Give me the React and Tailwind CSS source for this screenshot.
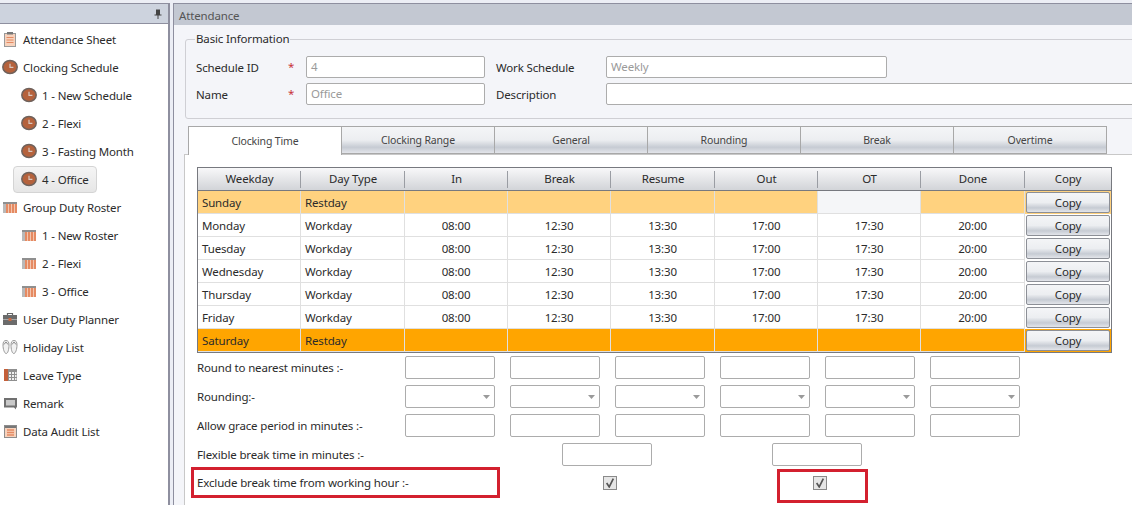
import React from "react";

const weekdays = [
  { day: "Sunday", type: "Restday", bg: "bg-[#ffd27f]", rest: true },
  { day: "Monday", type: "Workday" },
  { day: "Tuesday", type: "Workday" },
  { day: "Wednesday", type: "Workday" },
  { day: "Thursday", type: "Workday" },
  { day: "Friday", type: "Workday" },
  { day: "Saturday", type: "Restday", bg: "bg-[#ffa500]", rest: true },
];

const times = ["08:00", "12:30", "13:30", "17:00", "17:30", "20:00"];
const headers = ["Weekday", "Day Type", "In", "Break", "Resume", "Out", "OT", "Done", "Copy"];
const tabs = ["Clocking Range", "General", "Rounding", "Break", "Overtime"];

const ClockIcon = () => (
  <svg width="16" height="16" viewBox="0 0 16 16" className="shrink-0">
    <ellipse cx="8" cy="8" rx="7.2" ry="6.6" fill="#b5623c" stroke="#6f625c" strokeWidth="1.5" />
    <path d="M8 4.8V8.3H11.4" fill="none" stroke="#d9c8c0" strokeWidth="1.2" />
  </svg>
);

const SheetIcon = () => (
  <svg width="16" height="16" viewBox="0 0 16 16" className="shrink-0">
    <rect x="2.5" y="2.5" width="11" height="13" fill="#f7d2bc" stroke="#999" />
    <rect x="5" y="1" width="6" height="2.5" fill="#777" />
    <path d="M4.5 6.5H11.5M4.5 9H11.5M4.5 11.5H11.5" stroke="#e58a62" strokeWidth="1.2" />
  </svg>
);

const RosterIcon = () => (
  <svg width="16" height="16" viewBox="0 0 16 16" className="shrink-0">
    <rect x="1" y="3" width="14" height="11" fill="#e58a62" />
    <rect x="1" y="3" width="14" height="2" fill="#8f8f8f" />
    <rect x="1" y="5" width="3" height="9" fill="#b9b9b9" />
    <path d="M6.5 5V14M9.5 5V14M12.5 5V14" stroke="#f3c5ae" strokeWidth="1" />
  </svg>
);

const BriefcaseIcon = () => (
  <svg width="16" height="16" viewBox="0 0 16 16" className="shrink-0">
    <path d="M5.5 4V2.5H10.5V4" fill="none" stroke="#666" strokeWidth="1.2" />
    <rect x="1" y="4" width="14" height="10" fill="#6b6b6b" />
    <rect x="1" y="8" width="14" height="1" fill="#a8a8a8" />
    <rect x="6.5" y="7" width="3" height="3" fill="#c96a42" />
  </svg>
);

const FlipFlopIcon = () => (
  <svg width="16" height="16" viewBox="0 0 16 16" className="shrink-0">
    <path d="M4 1.5C6 1.5 7 3 7 6C7 10 6 14.5 4.2 14.5C2.4 14.5 1 10 1 6C1 3 2 1.5 4 1.5Z" fill="#f2f2f2" stroke="#9a9a9a" />
    <path d="M12 1.5C14 1.5 15 3 15 6C15 10 13.6 14.5 11.8 14.5C10 14.5 9 10 9 6C9 3 10 1.5 12 1.5Z" fill="#f2f2f2" stroke="#9a9a9a" />
    <path d="M2 5.5L4 3L6 5.5M10 5.5L12 3L14 5.5" fill="none" stroke="#8a8a8a" />
  </svg>
);

const LeaveIcon = () => (
  <svg width="16" height="16" viewBox="0 0 16 16" className="shrink-0">
    <rect x="2" y="2" width="13" height="12" fill="#8f8f8f" />
    <rect x="2" y="2" width="4" height="12" fill="#c4603a" />
    <path d="M7 5H9V7H7ZM10 5H12V7H10ZM13 5H14.5V7H13ZM7 8H9V10H7ZM10 8H12V10H10ZM13 8H14.5V10H13ZM7 11H9V13H7ZM10 11H12V13H10ZM13 11H14.5V13H13Z" fill="#f1f1f1" />
  </svg>
);

const RemarkIcon = () => (
  <svg width="16" height="16" viewBox="0 0 16 16" className="shrink-0">
    <path d="M2 3H15V12.5H14V14.5L12 12.5H2Z" fill="#707070" />
    <rect x="4" y="5" width="9" height="5.5" fill="#c9c9c9" />
  </svg>
);

const AuditIcon = () => (
  <svg width="16" height="16" viewBox="0 0 16 16" className="shrink-0">
    <rect x="2.5" y="2.5" width="12" height="12" fill="#f7d2bc" stroke="#8d8d8d" />
    <rect x="3" y="3" width="11" height="2" fill="#777" />
    <path d="M5 7H12M5 9.5H12M5 12H12" stroke="#e58a62" strokeWidth="1.3" />
  </svg>
);

const menu = [
  { label: "Attendance Sheet", icon: SheetIcon },
  { label: "Clocking Schedule", icon: ClockIcon },
  { label: "1 - New Schedule", icon: ClockIcon, sub: true },
  { label: "2 - Flexi", icon: ClockIcon, sub: true },
  { label: "3 - Fasting Month", icon: ClockIcon, sub: true },
  { label: "4 - Office", icon: ClockIcon, sub: true, selected: true },
  { label: "Group Duty Roster", icon: RosterIcon },
  { label: "1 - New Roster", icon: RosterIcon, sub: true },
  { label: "2 - Flexi", icon: RosterIcon, sub: true },
  { label: "3 - Office", icon: RosterIcon, sub: true },
  { label: "User Duty Planner", icon: BriefcaseIcon },
  { label: "Holiday List", icon: FlipFlopIcon },
  { label: "Leave Type", icon: LeaveIcon },
  { label: "Remark", icon: RemarkIcon },
  { label: "Data Audit List", icon: AuditIcon },
];

const inputClass = "h-[22px] bg-white border border-[#acacac] rounded-[2px]";
const formInputClass = "h-[23px] bg-white border border-[#acacac] rounded-[2px]";
const glossClass = "bg-[linear-gradient(#f4f5f7_0%,#eceef1_50%,#c6cbd3_78%,#e3e5ea_100%)]";

const Sidebar = () => (
  <div className="w-[170px] shrink-0 bg-white border-r-2 border-[#8e8f9f] flex flex-col">
    <div className="h-[21px] bg-[#cdd3de] border-y border-[#8e8f9f] flex items-center justify-end pr-[6px]">
      <svg width="8" height="10" viewBox="0 0 8 10">
        <path d="M2 0.5H6V5.5H7.5V6.5H4.5V10H3.5V6.5H0.5V5.5H2Z" fill="#444" />
      </svg>
    </div>
    <ul className="pt-px">
      {menu.map((item, i) => {
        const Icon = item.icon;
        return (
          <li key={i} className={`h-7 flex items-center ${item.sub ? "pl-[21px]" : "pl-[2px]"}`}>
            {item.selected ? (
              <div className="-ml-2 pl-[7px] h-[27px] w-[84px] flex items-center gap-[5px] whitespace-nowrap rounded-[4px] border border-[#d4d4d4] bg-gradient-to-b from-[#f5f5f5] to-[#e6e6e6]">
                <Icon />
                <span className="pt-[2px]">{item.label}</span>
              </div>
            ) : (
              <div className="flex items-center gap-[5px] whitespace-nowrap">
                <Icon />
                <span className="pt-[2px]">{item.label}</span>
              </div>
            )}
          </li>
        );
      })}
    </ul>
  </div>
);

const BasicInfo = () => (
  <fieldset className="ml-[11px] -mr-3 mt-[7px] h-[87px] border border-[#cfcfd4] rounded-[3px] px-[10px]">
    <legend className="-ml-px px-[1px] leading-[14px]">Basic Information</legend>
    <div className="grid grid-cols-[92px_18px_179px_121px_281px_1fr] gap-y-[5px] items-center pt-[10px]">
      <span className="pt-px">Schedule ID</span>
      <span className="text-[#c8333a]">*</span>
      <div className={`${inputClass} flex items-center px-1 text-[#9a9a9a]`}>4</div>
      <span className="pl-[11px] pt-px">Work Schedule</span>
      <div className={`${inputClass} flex items-center px-1 text-[#9a9a9a]`}>Weekly</div>
      <span />
      <span className="pt-px">Name</span>
      <span className="text-[#c8333a]">*</span>
      <div className={`${inputClass} flex items-center px-1 text-[#9a9a9a]`}>Office</div>
      <span className="pl-[11px] pt-px">Description</span>
      <div className={`${inputClass} w-[560px]`} />
    </div>
  </fieldset>
);

const Tabs = () => (
  <div className="ml-[14px] mt-[6px] flex items-end h-[29px]">
    <div className="w-[154px] h-[29px] relative z-10 -mb-px bg-white border border-b-0 border-[#a8a8a8] flex items-center justify-center text-[10.5px] text-[#444]">
      Clocking Time
    </div>
    {tabs.map((t) => (
      <div key={t} className={`w-[153px] h-[28px] border border-l-0 border-[#a8a8a8] flex items-center justify-center text-[10.5px] text-[#444] ${glossClass}`}>
        {t}
      </div>
    ))}
  </div>
);

const tableCols = "grid grid-cols-[103px_104px_103px_103px_104px_103px_103px_104px_86px]";
const cellClass = "flex items-center pt-px border-r border-b border-[#e0e0e0]";

const Schedule = () => (
  <div className="w-[915px] border border-[#77797f] bg-white">
    <div className={`${tableCols} h-[23px] bg-gradient-to-b from-[#f8f8f9] to-[#d2d4d8] border-b border-[#77797f]`}>
      {headers.map((h, i) => (
        <div key={h} className="flex items-center justify-center relative">
          {h}
          {i < 8 && <span className="absolute right-0 top-[3px] bottom-[2px] w-px bg-[#9a9da3]" />}
        </div>
      ))}
    </div>
    {weekdays.map((row) => (
      <div key={row.day} className={`${tableCols} h-[23px] ${row.bg || "bg-white"}`}>
        <div className={`${cellClass} pl-[4px]`}>{row.day}</div>
        <div className={`${cellClass} pl-[4px]`}>{row.type}</div>
        {times.map((t, i) => (
          <div
            key={i}
            className={`${cellClass} justify-center ${row.day === "Sunday" && i === 4 ? "bg-[#f5f6f8]" : ""}`}
          >
            {row.rest ? "" : t}
          </div>
        ))}
        <div className={`m-px rounded-[2px] border border-[#8c8f96] flex items-center justify-center ${glossClass}`}>
          Copy
        </div>
      </div>
    ))}
  </div>
);

const Caret = () => (
  <svg width="7" height="4" viewBox="0 0 7 4">
    <path d="M0 0H7L3.5 4Z" fill="#9a9a9a" />
  </svg>
);

const CheckBox = () => (
  <div className="w-[14px] h-[14px] border border-[#8a8a8a] bg-[#e6e6e6] flex items-center justify-center">
    <svg width="10" height="10" viewBox="0 0 9 9">
      <path d="M1.5 4.5L3.8 8L7.5 0.5" fill="none" stroke="#555" strokeWidth="1.5" />
    </svg>
  </div>
);

const FormRow = ({ label, children, className = "" }) => (
  <div className={`flex items-center ${className}`}>
    <span className="w-[208px] shrink-0 whitespace-nowrap">{label}</span>
    <div className="grid grid-cols-[repeat(6,90px)] gap-x-[15px] items-center">{children}</div>
  </div>
);

const Rounding = () => (
  <div className="mt-[3px] relative">
    <FormRow label="Round to nearest minutes :-">
      {times.map((t) => <div key={t} className={formInputClass} />)}
    </FormRow>
    <FormRow label="Rounding:-" className="mt-[6px]">
      {times.map((t) => (
        <div key={t} className={`${formInputClass} flex items-center justify-end pr-[4px]`}>
          <Caret />
        </div>
      ))}
    </FormRow>
    <FormRow label="Allow grace period in minutes :-" className="mt-[6px]">
      {times.map((t) => <div key={t} className={formInputClass} />)}
    </FormRow>
    <FormRow label="Flexible break time in minutes :-" className="mt-[6px]">
      <div className={`${formInputClass} col-start-2 col-span-2 justify-self-center w-[90px] mr-px`} />
      <div className={`${formInputClass} col-start-4 col-span-2 justify-self-center w-[90px] mr-px`} />
    </FormRow>
    <FormRow label="Exclude break time from working hour :-" className="mt-[10px]">
      <div className="col-start-2 col-span-2 justify-self-center ml-[4px]"><CheckBox /></div>
      <div className="col-start-4 col-span-2 justify-self-center ml-[4px]"><CheckBox /></div>
    </FormRow>
    {/* red annotation boxes */}
    <div className="absolute left-[-6px] top-[111px] w-[309px] h-[31px] border-[3px] border-[#d3202f]" />
    <div className="absolute left-[580px] top-[113px] w-[91px] h-[34px] border-[3px] border-[#d3202f]" />
  </div>
);

export default function App() {
  return (
    <div className="w-[1132px] h-[505px] overflow-hidden flex pt-[3px] gap-[3px] bg-[#eceef5] text-[11.5px] tracking-[-0.15px] leading-none text-[#2b2b2b] font-['Noto_Sans',sans-serif]">
      <Sidebar />
      <div className="flex-1 min-w-0 flex flex-col border-l border-t border-[#8e8f9f] bg-[#f4f5f9]">
        <div className="h-[21px] shrink-0 bg-[#c3c8d2] flex items-center pl-[5px] pt-[3px] text-[#555]">Attendance</div>
        <BasicInfo />
        <Tabs />
        <div className="ml-[10px] flex-1 bg-white border-t border-l border-[#c8c8c8] pt-[12px] pl-[12px]">
          <Schedule />
          <Rounding />
        </div>
      </div>
    </div>
  );
}
